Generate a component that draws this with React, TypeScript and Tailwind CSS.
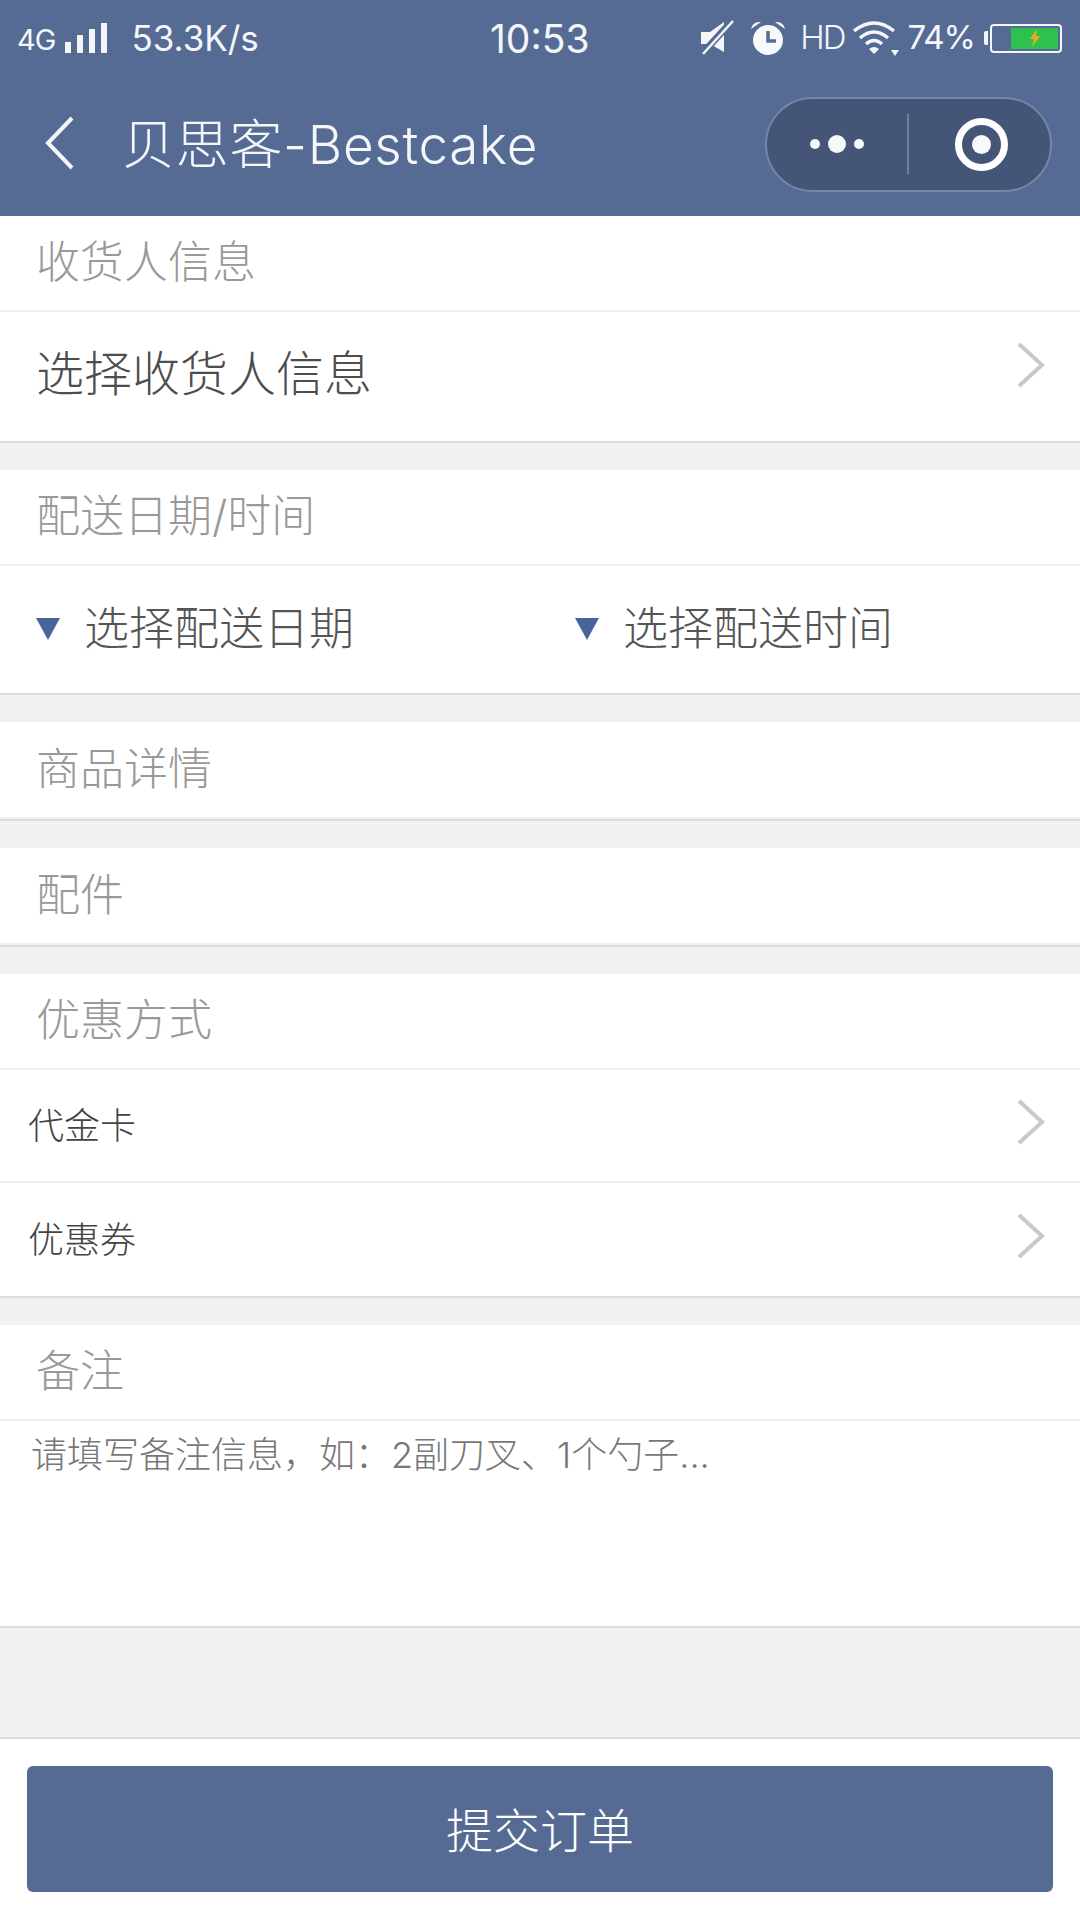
const FONT = 'font-["Inter","Noto_Sans_CJK_SC",sans-serif]';

function Chevron({ className = '' }: { className?: string }) {
  return (
    <svg width="30" height="48" viewBox="0 0 30 48" fill="none" className={`shrink-0 ${className}`}>
      <path d="M3 3 L26 24 L3 45" stroke="#c9c9c9" strokeWidth="4" />
    </svg>
  );
}

function Caret() {
  return (
    <svg width="24" height="24" viewBox="0 0 24 24" className="shrink-0">
      <path d="M0 1 H24 L12 23 Z" fill="#46669a" />
    </svg>
  );
}

function SectionHead({ title, tall }: { title: string; tall?: boolean }) {
  return (
    <div className={`${tall ? 'h-[97px]' : 'h-[96px]'} pl-[36px] pb-[2px] flex items-center bg-white border-b-[2px] border-[#efefef] text-[44px] font-light text-[#999999]`}>
      {title}
    </div>
  );
}

function Gap() {
  return <div className="h-[29px] bg-[#f2f1f1] border-t-[2px] border-[#dcdcdc]" />;
}

function LinkRow({ label, last }: { label: string; last?: boolean }) {
  return (
    <div className={`h-[113px] pl-[28px] pr-[34px] flex items-center justify-between bg-white text-[36px] font-light text-[#444444] ${last ? '' : 'border-b-[2px] border-[#efefef]'}`}>
      <span>{label}</span>
      <Chevron className="mb-[8px]" />
    </div>
  );
}

function StatusIcons() {
  return (
    <div className="flex items-center">
      <svg width="36" height="36" viewBox="0 0 36 36" className="mr-[14px]">
        <path d="M1 12 H10 L24 2 V32 L10 24 H1 Z" fill="#f4f6fa" />
        <path d="M2 34 L32 1" stroke="#566b93" strokeWidth="7" />
        <path d="M3 34 L33 1" stroke="#f4f6fa" strokeWidth="2.5" />
      </svg>
      <svg width="36" height="36" viewBox="0 0 36 36" className="mr-[14px]">
        <circle cx="18" cy="20" r="15" fill="#f8f9fb" />
        <path d="M1 9 Q3 1 11 2 Z M35 9 Q33 1 25 2 Z" fill="#f8f9fb" />
        <path d="M18 11 V21 H26" fill="none" stroke="#566b93" strokeWidth="3.5" />
      </svg>
      <span className="text-[33px] font-light tracking-[-2px] text-[#f4f6fa] mr-[8px]">HD</span>
      <svg width="46" height="36" viewBox="0 0 46 36" className="mr-[9px]">
        <path d="M1 11 Q21 -5 41 11" fill="none" stroke="#f4f6fa" strokeWidth="3.5" />
        <path d="M7 18 Q21 6 35 18" fill="none" stroke="#f4f6fa" strokeWidth="3.5" />
        <path d="M13 24 Q21 17 29 24" fill="none" stroke="#f4f6fa" strokeWidth="3.5" />
        <path d="M16 29 Q21 25 26 29 L21 34 Z" fill="#f4f6fa" />
        <path d="M38 30 H46 L42 36 Z" fill="#f4f6fa" />
      </svg>
      <span className="text-[33px] tracking-[-1px] text-[#f4f6fa] mr-[9px]">74%</span>
      <div className="w-[4px] h-[14px] bg-[#f4f6fa] rounded-l-[2px]" />
      <div className="ml-[2px] w-[72px] h-[29px] border-[2px] border-[#f4f6fa] rounded-[4px] flex justify-end p-[2px]">
        <div className="w-[47px] bg-[#2fc14f] flex items-center justify-center">
          <svg width="14" height="18" viewBox="0 0 14 18">
            <path d="M9 0 L2 10 H6 L4 18 L12 7 H8 Z" fill="#f0a81e" />
          </svg>
        </div>
      </div>
    </div>
  );
}

export default function App() {
  return (
    <div className={`w-[1080px] h-[1920px] flex flex-col bg-[#f2f1f1] overflow-hidden ${FONT}`}>
      <header className="h-[216px] shrink-0 bg-[#566b93] text-[#f4f6fa]">
        <div className="h-[76px] pl-[17px] pr-[18px] flex items-center justify-between relative">
          <div className="flex items-center">
            <span className="text-[29px] tracking-[-1px] mt-[4px]">4G</span>
            <div className="ml-[10px] flex items-end gap-[6px] h-[30px]">
              <div className="w-[6px] h-[11px] bg-[#f4f6fa]" />
              <div className="w-[6px] h-[18px] bg-[#f4f6fa]" />
              <div className="w-[6px] h-[24px] bg-[#f4f6fa]" />
              <div className="w-[6px] h-[30px] bg-[#f4f6fa]" />
            </div>
            <span className="ml-[24px] text-[35px]">53.3K/s</span>
          </div>
          <span className="absolute left-[490px] top-[10px] text-[39px]">10:53</span>
          <StatusIcons />
        </div>
        <div className="h-[140px] pl-[45px] pr-[28px] flex items-center">
          <svg width="30" height="54" viewBox="0 0 30 54" className="shrink-0 mb-[6px]">
            <path d="M27 2 L3 27 L27 52" fill="none" stroke="#f4f6fa" strokeWidth="4" />
          </svg>
          <span className="ml-[47px] text-[53px] font-light leading-none tracking-[0.7px] mb-[2px]">贝思客-Bestcake</span>
          <div className="ml-auto mb-[4px] w-[287px] h-[95px] rounded-full bg-[#445578] border-[2px] border-[#7586a8] flex items-center">
            <div className="w-[140px] flex items-center justify-center gap-[8px]">
              <div className="w-[10px] h-[10px] rounded-full bg-[#f8f9fb]" />
              <div className="w-[18px] h-[18px] rounded-full bg-[#f8f9fb]" />
              <div className="w-[10px] h-[10px] rounded-full bg-[#f8f9fb]" />
            </div>
            <div className="w-[2px] h-[60px] bg-[#6f80a3]" />
            <div className="flex-1 flex items-center justify-center pl-[4px]">
              <div className="w-[53px] h-[53px] rounded-full border-[7px] border-white flex items-center justify-center">
                <div className="w-[19px] h-[19px] rounded-full bg-[#f8f9fb]" />
              </div>
            </div>
          </div>
        </div>
      </header>

      <SectionHead title="收货人信息" />
      <div className="h-[129px] pl-[36px] pr-[34px] pb-[6px] flex items-center justify-between bg-white text-[48px] font-light text-[#4d4d4d]">
        <span>选择收货人信息</span>
        <Chevron className="mb-[18px]" />
      </div>
      <Gap />

      <SectionHead title="配送日期/时间" />
      <div className="h-[127px] pb-[2px] flex items-center bg-white text-[45px] font-light text-[#555555]">
        <div className="w-[539px] pl-[36px] flex items-center gap-[24px]">
          <Caret />
          <span>选择配送日期</span>
        </div>
        <div className="pl-[36px] flex items-center gap-[24px]">
          <Caret />
          <span>选择配送时间</span>
        </div>
      </div>
      <Gap />

      <SectionHead title="商品详情" tall />
      <Gap />

      <SectionHead title="配件" tall />
      <Gap />

      <SectionHead title="优惠方式" />
      <LinkRow label="代金卡" />
      <LinkRow label="优惠券" last />
      <Gap />

      <SectionHead title="备注" />
      <div className="h-[205px] pl-[31px] pt-[7px] bg-white text-[36px] font-light text-[#777777]">
        请填写备注信息，如：2副刀叉、1个勺子...
      </div>
      <div className="h-[111px] border-t-[2px] border-[#dcdcdc]" />

      <div className="flex-1 bg-white border-t-[2px] border-[#dcdcdc] px-[27px] pt-[27px]">
        <button className="w-full h-[126px] pt-[4px] rounded-[6px] bg-[#566b93] text-[47px] font-light text-white">
          提交订单
        </button>
      </div>
    </div>
  );
}
